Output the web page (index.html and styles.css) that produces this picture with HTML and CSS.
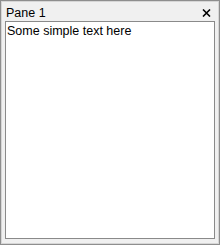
FILE: index.html
```html
<!DOCTYPE html>
<html>
  <head>
    <title>Pane</title>
    <meta charset="utf-8"/>
    <link rel="stylesheet" href="styles.css">
  </head>
  <body>
    <div class="pane">
      <div class="header">
        <span class="title">Pane 1</span>
        <span class="close">
          <svg width="9" height="8" viewBox="0 0 9 8">
            <path d="M1 0.5 L8 7.5 M8 0.5 L1 7.5" stroke="#000" stroke-width="1.6"/>
          </svg>
        </span>
      </div>
      <div class="content">Some simple text here</div>
    </div>
  </body>
</html>
```

FILE: styles.css
```css
html, body {
  margin: 0;
  padding: 0;
  background: #fff;
}
.pane {
  box-sizing: border-box;
  width: 220px;
  height: 245px;
  border: 1px solid #8e8e8e;
  box-shadow: inset 1px 1px 0 #d6d6d6, inset -1px -1px 0 #d6d6d6;
  background: #f0f0f0;
  display: flex;
  flex-direction: column;
  padding: 0 4px 5px 4px;
  font-family: "Liberation Sans", Arial, sans-serif;
  font-size: 12.5px;
  color: #000;
}
.header {
  height: 20px;
  display: flex;
  align-items: center;
  justify-content: space-between;
  padding: 0 0 0 1px;
}
.title {
  padding-top: 3px;
}
.close {
  display: flex;
  margin-right: 4px;
  padding-top: 3px;
}
.content {
  flex: 1;
  background: #fff;
  border: 1px solid #8a8a8a;
  padding: 1px 1px 0 1px;
  line-height: 16px;
}
```
